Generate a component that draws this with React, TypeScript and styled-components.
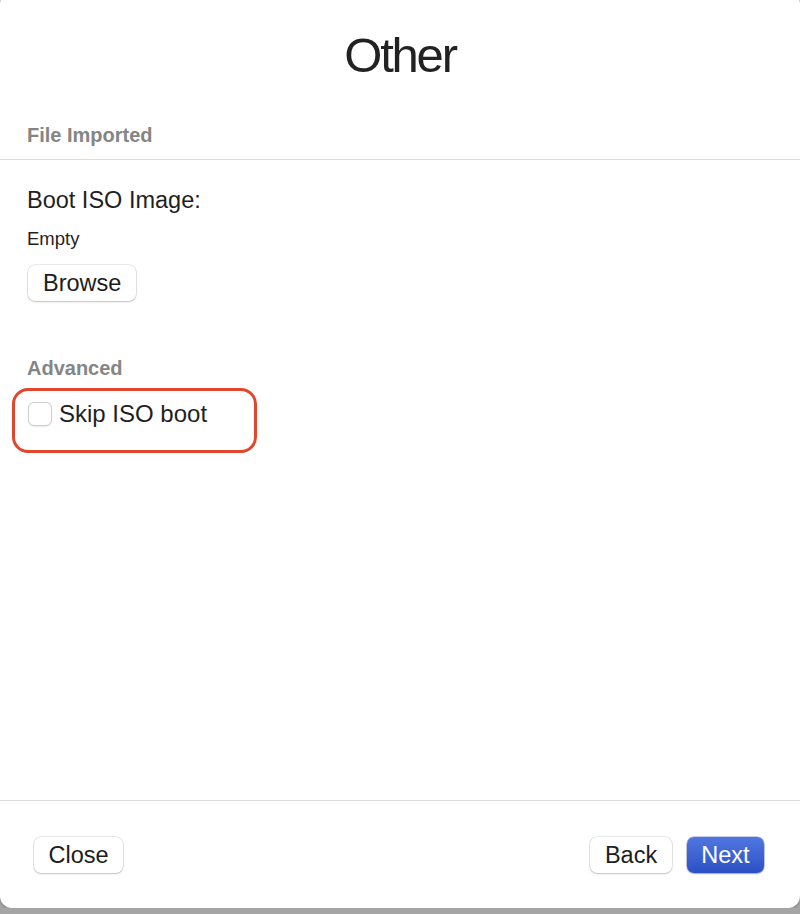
import React, { useState } from 'react'
import styled, { createGlobalStyle } from 'styled-components'

const GlobalStyle = createGlobalStyle`
  html, body {
    margin: 0;
    padding: 0;
    background: #a5a5a5;
    font-family: 'Liberation Sans', Arial, Helvetica, sans-serif;
    -webkit-font-smoothing: antialiased;
  }
  * {
    box-sizing: border-box;
  }
`

const App = () => {
  const [skipBoot, setSkipBoot] = useState(false)

  return (
    <>
      <GlobalStyle />
      <Window>
        <Header>
          <Title>Other</Title>
        </Header>
        <SectionHeader>File Imported</SectionHeader>
        <Body>
          <FieldLabel>Boot ISO Image:</FieldLabel>
          <FieldValue>Empty</FieldValue>
          <BrowseButton>Browse</BrowseButton>
          <GroupLabel>Advanced</GroupLabel>
          <CheckRow>
            <Highlight />
            <Checkbox
              type="checkbox"
              checked={skipBoot}
              onChange={(e) => setSkipBoot(e.target.checked)}
            />
            <CheckText>Skip ISO boot</CheckText>
          </CheckRow>
        </Body>
        <Footer>
          <Button>Close</Button>
          <FooterRight>
            <Button>Back</Button>
            <Button primary>Next</Button>
          </FooterRight>
        </Footer>
      </Window>
    </>
  )
}
export default App

export const Window = styled.div`
  display: flex;
  flex-direction: column;
  width: 800px;
  height: 916px;
  margin-top: -8px;
  background: #ffffff;
  border-radius: 12px;
  box-shadow: 0 1px 3px rgba(0, 0, 0, 0.25);
  overflow: hidden;
`
export const Header = styled.div`
  display: flex;
  justify-content: center;
  padding-top: 33px;
`
export const Title = styled.h1`
  margin: 0;
  font-size: 49px;
  line-height: 60px;
  font-weight: 400;
  letter-spacing: -2.2px;
  color: #222222;
`
export const SectionHeader = styled.div`
  margin-top: 38px;
  padding: 0 27px 12px;
  border-bottom: 1px solid #dcdcdc;
  font-size: 20px;
  line-height: 24px;
  font-weight: 700;
  color: #858585;
`
export const Body = styled.div`
  flex: 1;
  display: flex;
  flex-direction: column;
  align-items: flex-start;
  padding: 26px 27px 0;
`
export const FieldLabel = styled.div`
  font-size: 23.5px;
  line-height: 28px;
  color: #1f1f1f;
`
export const FieldValue = styled.div`
  margin-top: 14px;
  margin-bottom: 15px;
  font-size: 18.5px;
  line-height: 22px;
  color: #1f1f1f;
`
export const GroupLabel = styled.div`
  margin-top: 55px;
  font-size: 20px;
  line-height: 24px;
  font-weight: 700;
  color: #858585;
`
export const CheckRow = styled.label`
  position: relative;
  display: flex;
  align-items: center;
  gap: 7px;
  height: 28px;
  margin-top: 20px;
  padding-left: 1px;
`
export const Highlight = styled.span`
  position: absolute;
  left: -15px;
  top: -12px;
  width: 245px;
  height: 65px;
  border: 3px solid #e2462c;
  border-radius: 16px;
  pointer-events: none;
`
export const Checkbox = styled.input`
  appearance: none;
  margin: 0;
  width: 24px;
  height: 24px;
  border: 1px solid #cdcdcd;
  border-radius: 6px;
  background: #ffffff;
  box-shadow: 0 0.5px 1px rgba(0, 0, 0, 0.08);
`
export const CheckText = styled.span`
  font-size: 24px;
  line-height: 28px;
  color: #1f1f1f;
`
export const Footer = styled.div`
  display: flex;
  justify-content: space-between;
  align-items: center;
  padding: 36px 36px 35px 34px;
  border-top: 1px solid #dcdcdc;
`
export const FooterRight = styled.div`
  display: flex;
  gap: 15px;
`
export const Button = styled.button<{ primary?: boolean }>`
  height: 36px;
  padding: 0 14.5px;
  border: none;
  border-radius: 7px;
  font-family: 'Liberation Sans', Arial, Helvetica, sans-serif;
  font-size: 23.5px;
  line-height: 36px;
  color: ${(p) => (p.primary ? '#ffffff' : '#1d1d1d')};
  background: ${(p) =>
    p.primary ? 'linear-gradient(#5077e0, #2c50c4)' : '#ffffff'};
  box-shadow: ${(p) =>
    p.primary
      ? '0 0 0 0.5px rgba(30, 60, 160, 0.5), 0 1px 2px rgba(0, 0, 0, 0.2)'
      : '0 0 0 0.5px rgba(0, 0, 0, 0.16), 0 1px 2px rgba(0, 0, 0, 0.18)'};
`
export const BrowseButton = styled(Button)`
  margin-left: 1px;
  padding: 0 15px;
`
